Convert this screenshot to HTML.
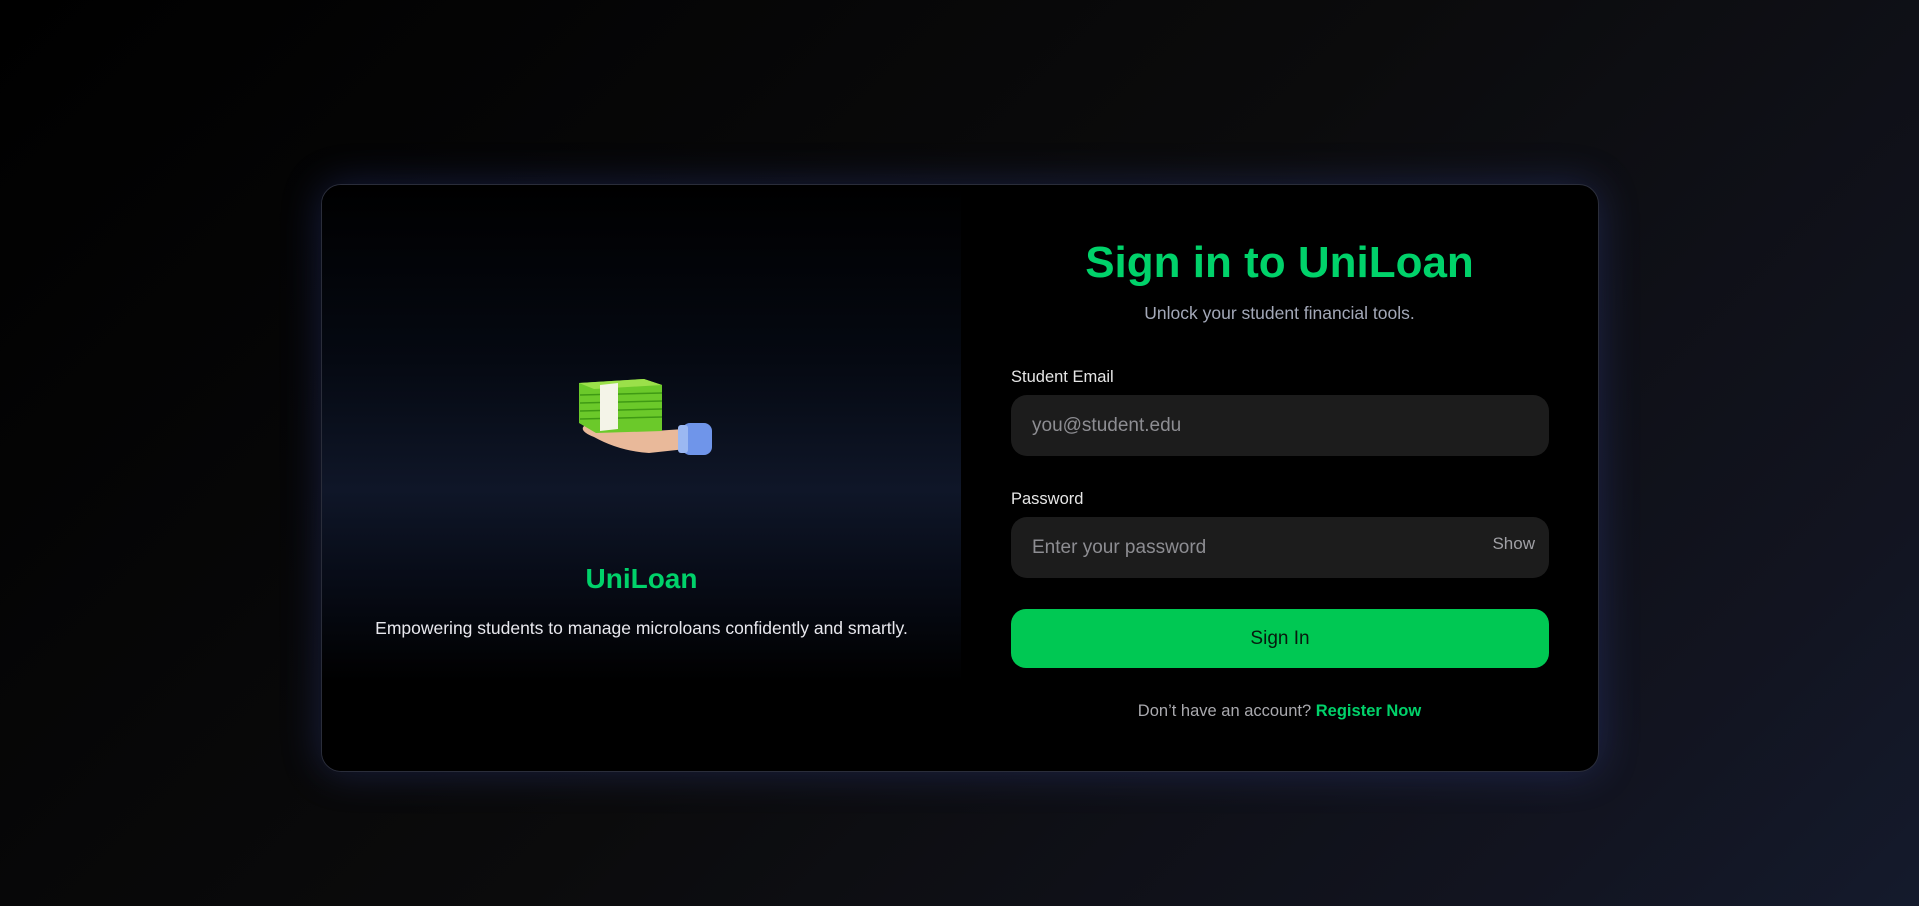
<!DOCTYPE html>
<html><head><meta charset="utf-8"><style>
html,body{margin:0;padding:0;width:1919px;height:906px;overflow:hidden}
body{background:linear-gradient(135deg,#000 0%,#0b0b0c 50%,#121420 85%,#141a2c 100%);font-family:"Liberation Sans",sans-serif;position:relative}
.card{position:absolute;left:321px;top:184px;width:1276px;height:586px;border:1px solid #2a2d3a;border-radius:20px;background:#000;box-shadow:0 0 40px rgba(70,90,200,.28);overflow:hidden}
.left{position:absolute;left:0;top:0;width:639px;height:100%;background:linear-gradient(180deg,#000 0%,#050912 30%,#0f1628 52%,#070b16 68%,#000 85%)}
.brand{position:absolute;left:0;width:100%;top:378px;text-align:center;color:#00d26a;font-weight:bold;font-size:28px}
.tag{position:absolute;left:0;width:100%;top:433px;text-align:center;color:#e8e8ee;font-size:17.5px}
.title{position:absolute;left:639px;width:637px;top:53px;text-align:center;color:#00d26a;font-weight:bold;font-size:44px}
.sub{position:absolute;left:639px;width:637px;top:118px;text-align:center;color:#a3a8b8;font-size:17.5px}
.lbl{position:absolute;left:689px;color:#e6e6e6;font-size:16.5px}
.inp{position:absolute;left:689px;width:538px;height:61px;background:#1c1c1c;border-radius:16px;color:#8d8d92;font-size:19px;line-height:61px;box-sizing:border-box;padding-left:21px}
.show{position:absolute;right:14px;top:-4px;color:#a0a0a5;font-size:17px}
.btn{position:absolute;left:689px;top:424px;width:538px;height:59px;background:#00c853;border-radius:15px;text-align:center;line-height:59px;font-size:19px;color:#071a0e}
.foot{position:absolute;left:639px;width:637px;top:517px;text-align:center;color:#a9a9ae;font-size:16.5px}
.foot b{color:#00d26a}
</style></head><body>
<div class="card">
 <div class="left">
  <svg style="position:absolute;left:252px;top:186px" width="140" height="90" viewBox="0 0 140 90">
   <path d="M10 55 Q20 48 45 52 L80 60 L110 58 L112 78 L75 82 Q45 80 20 66 Q5 60 10 55Z" fill="#e9b99a"/>
   <rect x="108" y="52" width="30" height="32" rx="8" fill="#6f95ea"/>
   <rect x="104" y="54" width="10" height="28" rx="3" fill="#9bb8f2"/>
   <path d="M5 12 L70 8 L88 14 L88 60 L22 62 L5 52Z" fill="#6bc92a"/>
   <path d="M5 12 L70 8 L88 14 L20 18Z" fill="#9be04a"/>
   <g stroke="#3f9a14" stroke-width="1.5"><line x1="6" y1="24" x2="88" y2="22"/><line x1="6" y1="32" x2="88" y2="30"/><line x1="6" y1="40" x2="88" y2="38"/><line x1="6" y1="48" x2="88" y2="46"/></g>
   <path d="M26 14 L44 12 L44 58 L26 60Z" fill="#f4f4e8"/>
  </svg>
  <div class="brand">UniLoan</div>
  <div class="tag">Empowering students to manage microloans confidently and smartly.</div>
 </div>
 <div class="title">Sign in to UniLoan</div>
 <div class="sub">Unlock your student financial tools.</div>
 <div class="lbl" style="top:183px">Student Email</div>
 <div class="inp" style="top:210px">you@student.edu</div>
 <div class="lbl" style="top:305px">Password</div>
 <div class="inp" style="top:332px">Enter your password<span class="show">Show</span></div>
 <div class="btn">Sign In</div>
 <div class="foot">Don’t have an account? <b>Register Now</b></div>
</div>
</body></html>
